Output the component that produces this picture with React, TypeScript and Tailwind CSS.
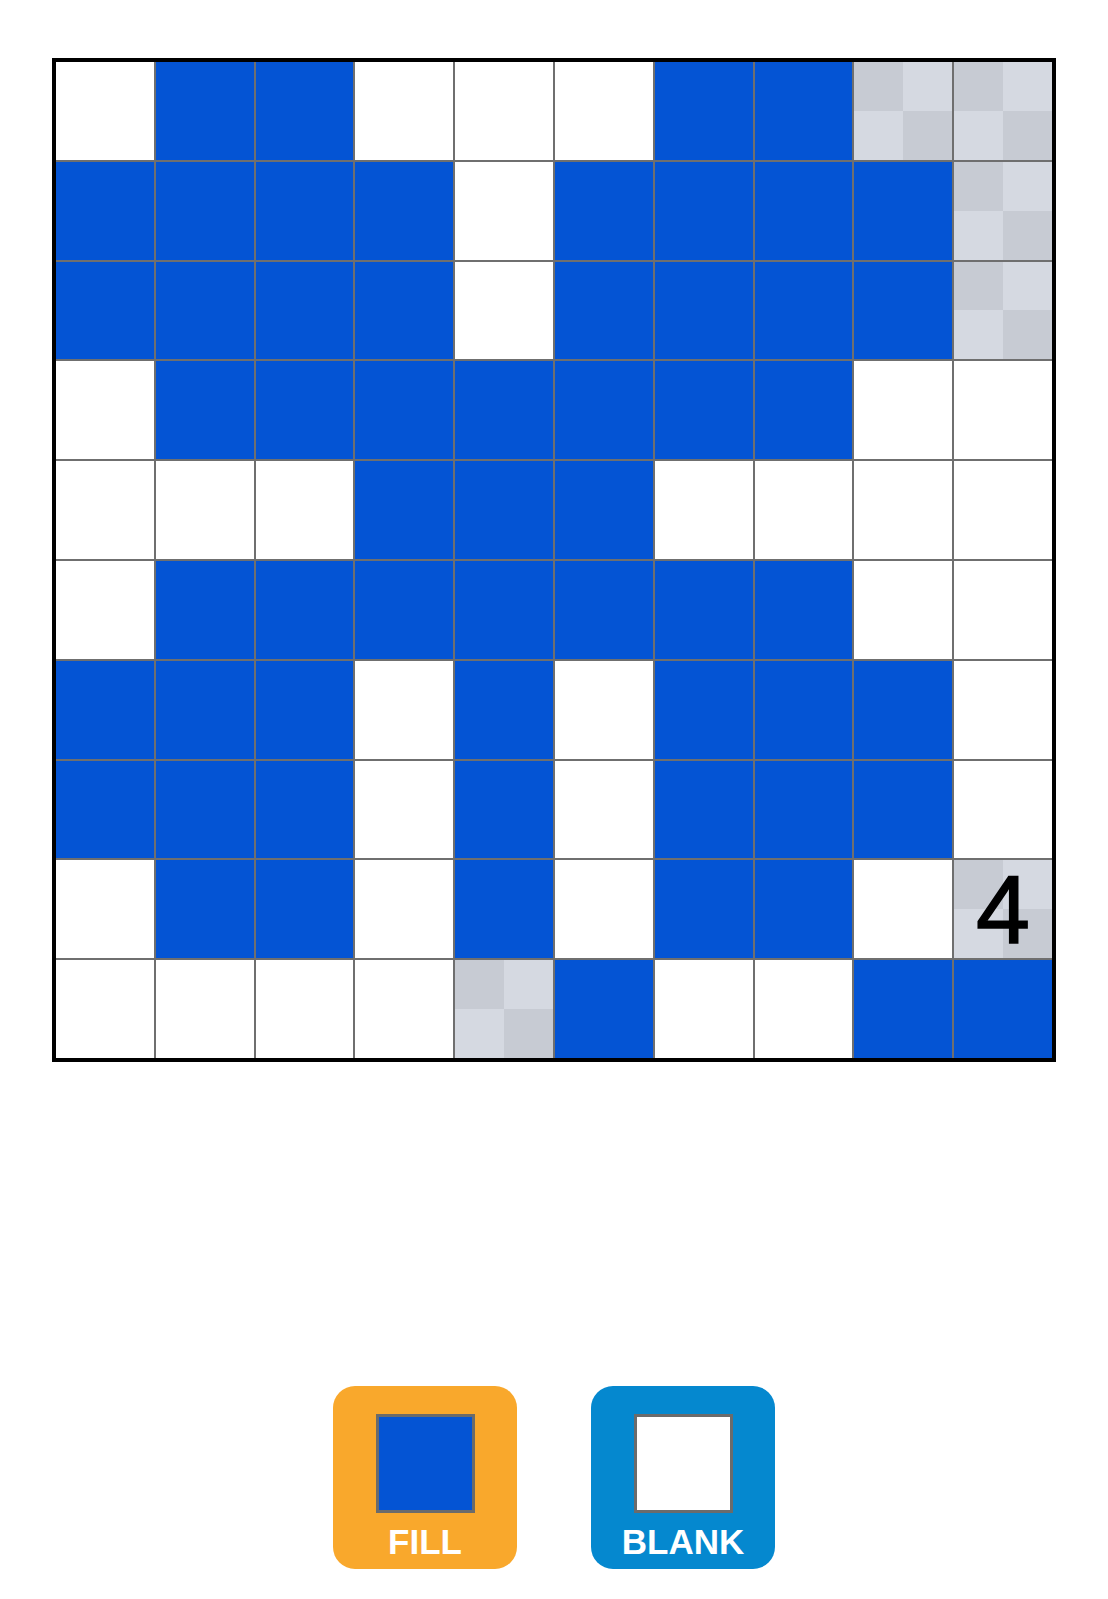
const BOARD = [
  'WBBWWWBBCC',
  'BBBBWBBBBC',
  'BBBBWBBBBC',
  'WBBBBBBBWW',
  'WWWBBBWWWW',
  'WBBBBBBBWW',
  'BBBWBWBBBW',
  'BBBWBWBBBW',
  'WBBWBWBBW4',
  'WWWWCBWWBB',
]

function Checker({ label }: { label?: string }) {
  return (
    <div className="relative grid grid-cols-2 grid-rows-2">
      <div className="bg-[#c7cbd3]" />
      <div className="bg-[#d5d9e1]" />
      <div className="bg-[#d5d9e1]" />
      <div className="bg-[#c7cbd3]" />
      {label && (
        <span className="absolute inset-0 flex items-center justify-center text-[97px] leading-none text-black [-webkit-text-stroke:1.5px_black] font-['Liberation_Sans',Arial,sans-serif]">
          {label}
        </span>
      )}
    </div>
  )
}

function Cell({ kind }: { kind: string }) {
  if (kind === 'B') return <div className="bg-[#0454d4]" />
  if (kind === 'W') return <div className="bg-white" />
  if (kind === 'C') return <Checker />
  return <Checker label={kind} />
}

export default function App() {
  return (
    <div className="min-h-[1599px] bg-white pt-[58px] font-['Liberation_Sans',Arial,sans-serif]">
      {/* board */}
      <div className="mx-auto grid h-[1004px] w-[1004px] grid-cols-10 grid-rows-10 gap-[2px] border-4 border-black bg-[#6f6f6f]">
        {BOARD.flatMap((row, r) =>
          row.split('').map((k, c) => <Cell key={`${r}-${c}`} kind={k} />)
        )}
      </div>

      {/* tools */}
      <div className="mt-[324px] flex justify-center gap-[74px]">
        <button className="flex h-[183px] w-[184px] flex-col items-center rounded-[22px] bg-[#f9a82c] pt-[28px]">
          <div className="h-[99px] w-[99px] border-[3px] border-[#6b6b6b] bg-[#0454d4]" />
          <span className="mt-[11px] text-[35px] font-bold leading-none text-white">FILL</span>
        </button>
        <button className="flex h-[183px] w-[184px] flex-col items-center rounded-[22px] bg-[#0588cf] pt-[28px]">
          <div className="h-[99px] w-[99px] border-[3px] border-[#6b6b6b] bg-white" />
          <span className="mt-[11px] text-[35px] font-bold leading-none text-white">BLANK</span>
        </button>
      </div>
    </div>
  )
}
